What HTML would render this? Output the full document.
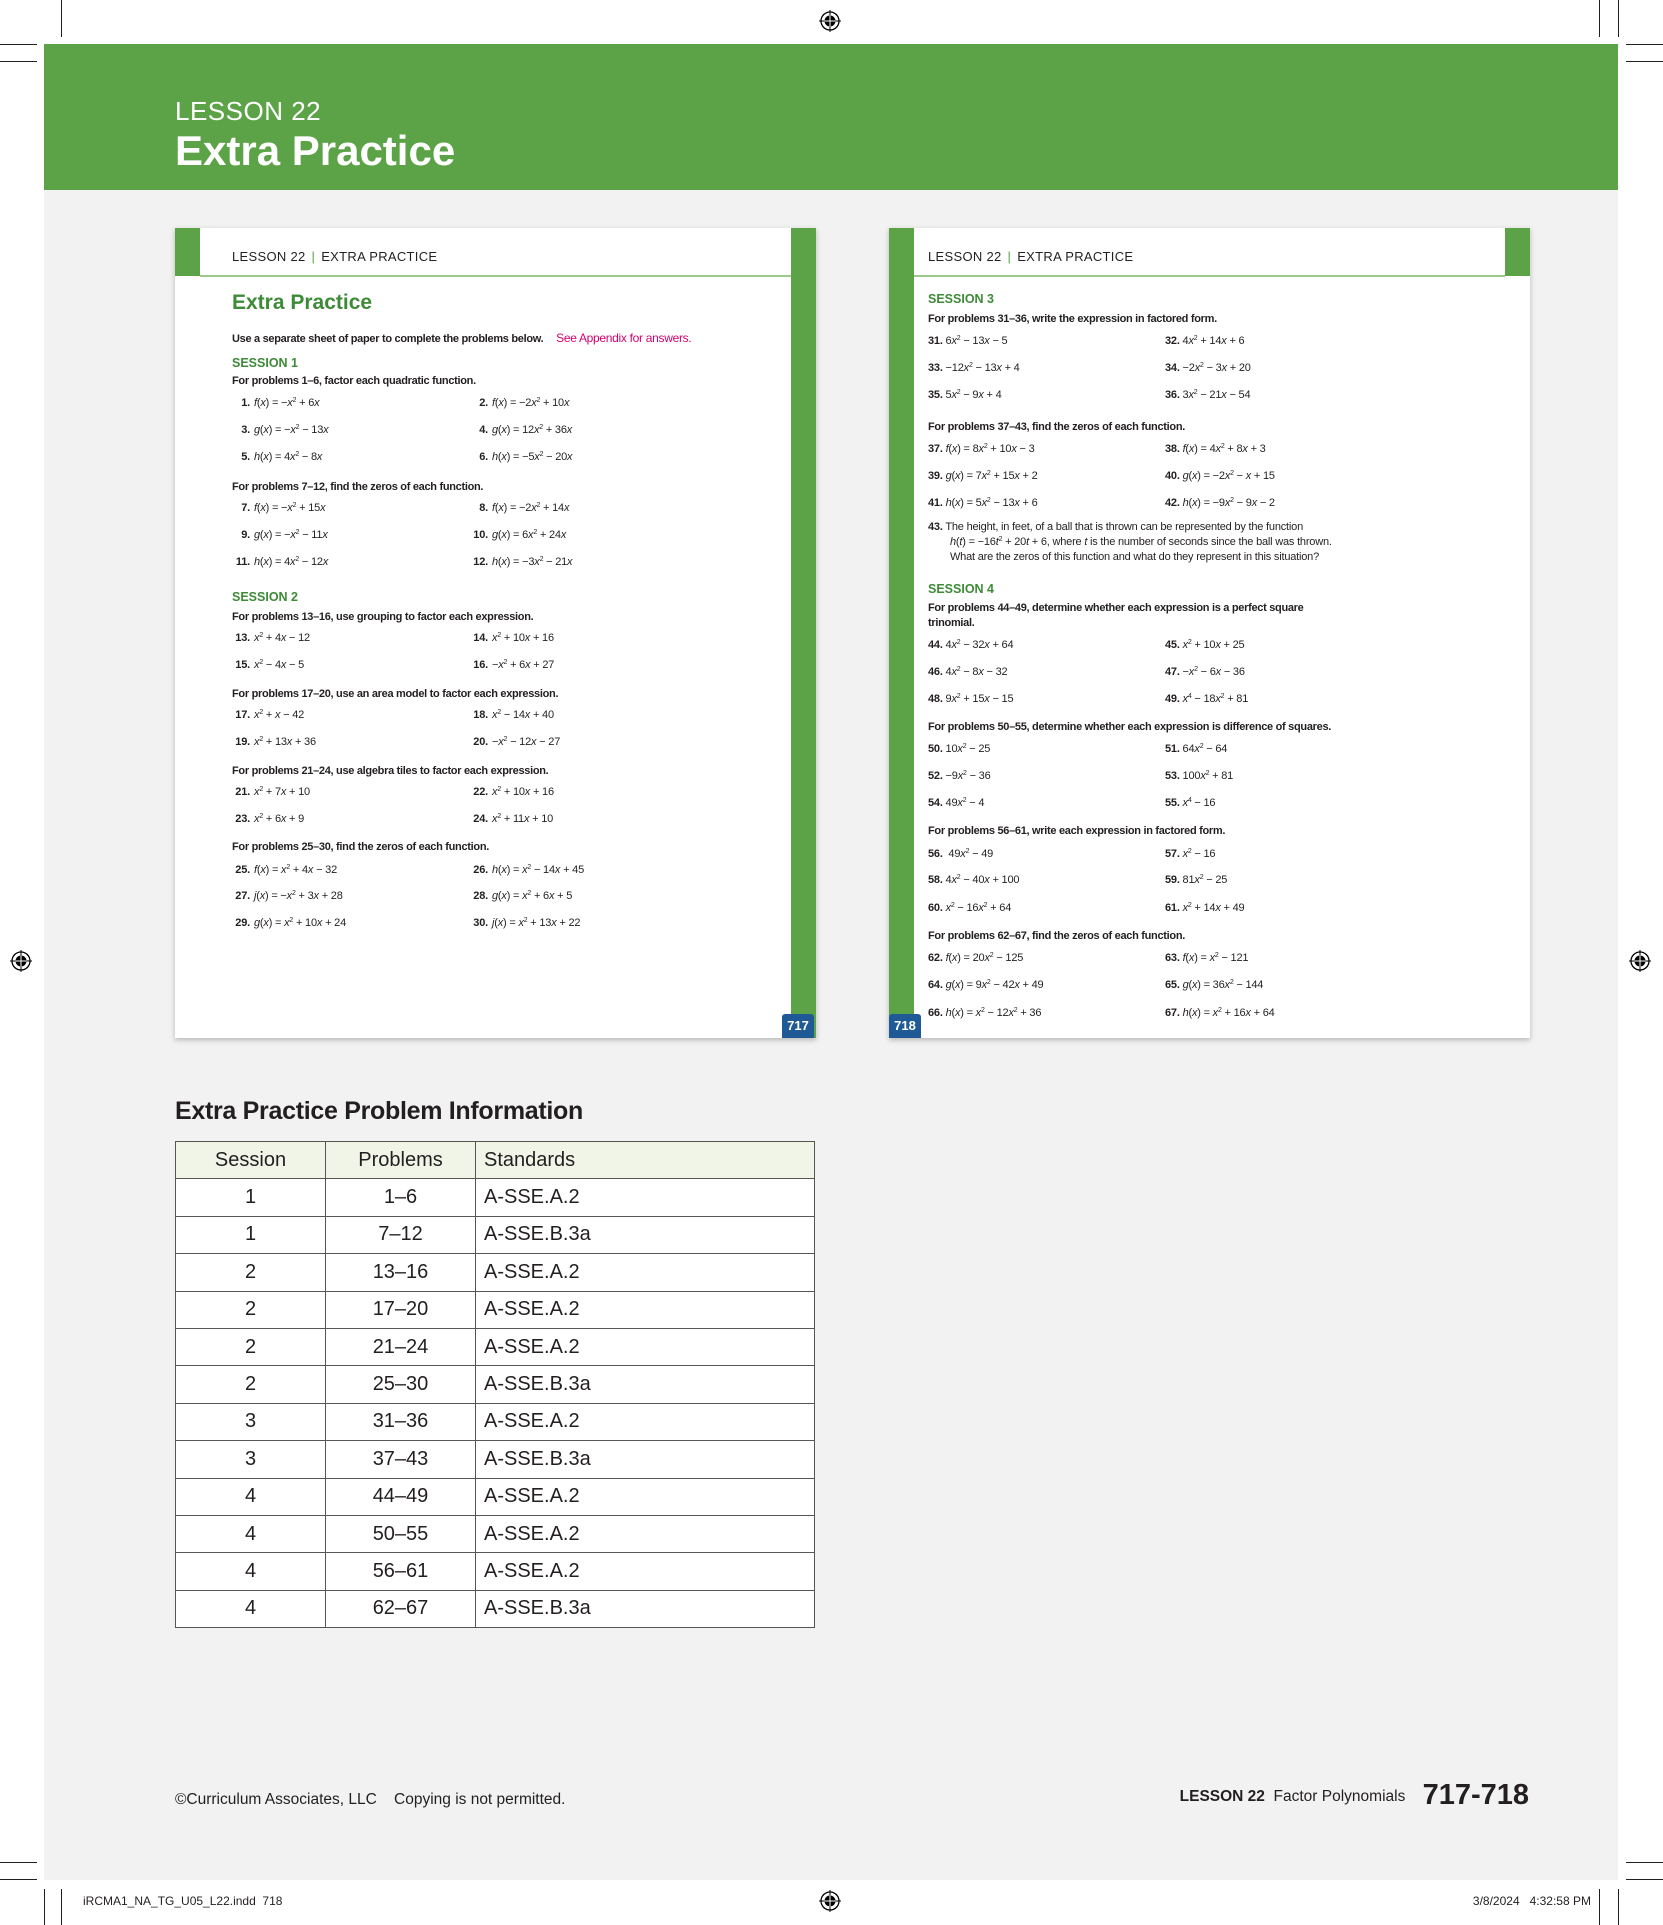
<!DOCTYPE html>
<html><head><meta charset="utf-8">
<style>
*{margin:0;padding:0;box-sizing:border-box}
body{width:1663px;height:1925px;position:relative;background:#fff;font-family:"Liberation Sans",sans-serif;color:#231f20;overflow:hidden}
.a{position:absolute;white-space:nowrap}
.gray{left:44px;top:44px;width:1574px;height:1836px;background:#f1f2f1}
.band{left:44px;top:44px;width:1574px;height:146px;background:#5ba346}
.pg{background:#fff;box-shadow:0 2px 5px rgba(0,0,0,.25)}
.g{background:#5ba346}
.hd{font-size:13px;letter-spacing:.3px;color:#231f20}
.hd b{color:#5ba346;font-weight:normal;margin:0 6px}
.t{font-size:11px;line-height:14px;letter-spacing:-.2px}
.t i{font-style:italic}
.n{font-weight:bold;font-size:11px}
.pr{font-weight:bold;font-size:11px;letter-spacing:-.3px;line-height:14px}
.ss{font-weight:bold;font-size:12.5px;color:#3d8b37;line-height:14px}
sup{font-size:7px;vertical-align:4px;line-height:0}
.ln{background:#231f20}
table{position:absolute;left:175px;top:1141px;width:640px;border-collapse:collapse;font-size:20px;background:#fff}
td,th{border:1.5px solid #555;height:37.4px;font-weight:normal;text-align:center}
th{background:#f0f5e8}
td:nth-child(3),th:nth-child(3){text-align:left;padding-left:8px}
</style></head><body>
<div class="a gray"></div>
<div class="a band"></div>
<div class="a" style="left:175px;top:96px;color:#fff;font-size:26px;letter-spacing:.5px">LESSON 22</div>
<div class="a" style="left:175px;top:127px;color:#fff;font-size:42px;font-weight:bold">Extra Practice</div>

<div class="a ln" style="left:61px;top:0;width:1px;height:37px"></div>
<div class="a ln" style="left:0;top:44px;width:37px;height:1px"></div>
<div class="a ln" style="left:1599px;top:0;width:1px;height:37px"></div>
<div class="a ln" style="left:1626px;top:44px;width:37px;height:1px"></div>
<div class="a ln" style="left:1618px;top:0;width:1px;height:37px"></div>
<div class="a ln" style="left:0;top:61px;width:37px;height:1px"></div>
<div class="a ln" style="left:1626px;top:61px;width:37px;height:1px"></div>
<div class="a ln" style="left:61px;top:1889px;width:1px;height:36px"></div>
<div class="a ln" style="left:44px;top:1889px;width:1px;height:36px"></div>
<div class="a ln" style="left:0;top:1879px;width:37px;height:1px"></div>
<div class="a ln" style="left:0;top:1862px;width:37px;height:1px"></div>
<div class="a ln" style="left:1599px;top:1889px;width:1px;height:36px"></div>
<div class="a ln" style="left:1618px;top:1889px;width:1px;height:36px"></div>
<div class="a ln" style="left:1626px;top:1879px;width:37px;height:1px"></div>
<div class="a ln" style="left:1626px;top:1862px;width:37px;height:1px"></div>
<svg class="a" style="left:819px;top:10px" width="22" height="22" viewBox="0 0 22 22"><circle cx="11" cy="11" r="9" fill="none" stroke="#000" stroke-width="1.3"/><circle cx="11" cy="11" r="5.5" fill="#000"/><path d="M0 11H22M11 0V22" stroke="#000" stroke-width="1"/><path d="M5.5 11H16.5M11 5.5V16.5" stroke="#fff" stroke-width="1"/></svg>
<svg class="a" style="left:819px;top:1890px" width="22" height="22" viewBox="0 0 22 22"><circle cx="11" cy="11" r="9" fill="none" stroke="#000" stroke-width="1.3"/><circle cx="11" cy="11" r="5.5" fill="#000"/><path d="M0 11H22M11 0V22" stroke="#000" stroke-width="1"/><path d="M5.5 11H16.5M11 5.5V16.5" stroke="#fff" stroke-width="1"/></svg>
<svg class="a" style="left:10px;top:950px" width="22" height="22" viewBox="0 0 22 22"><circle cx="11" cy="11" r="9" fill="none" stroke="#000" stroke-width="1.3"/><circle cx="11" cy="11" r="5.5" fill="#000"/><path d="M0 11H22M11 0V22" stroke="#000" stroke-width="1"/><path d="M5.5 11H16.5M11 5.5V16.5" stroke="#fff" stroke-width="1"/></svg>
<svg class="a" style="left:1629px;top:950px" width="22" height="22" viewBox="0 0 22 22"><circle cx="11" cy="11" r="9" fill="none" stroke="#000" stroke-width="1.3"/><circle cx="11" cy="11" r="5.5" fill="#000"/><path d="M0 11H22M11 0V22" stroke="#000" stroke-width="1"/><path d="M5.5 11H16.5M11 5.5V16.5" stroke="#fff" stroke-width="1"/></svg>

<div class="a pg" style="left:175px;top:228px;width:641px;height:810px"></div>
<div class="a g" style="left:175px;top:228px;width:25px;height:48px"></div>
<div class="a g" style="left:791px;top:228px;width:25px;height:810px"></div>
<div class="a" style="left:200px;top:275px;width:591px;height:1.5px;background:#9cc98c"></div>
<div class="a" style="left:782px;top:1014px;width:32px;height:24px;background:#1f5a96;border-radius:3px 3px 0 0;color:#fff;font-weight:bold;font-size:13px;text-align:center;line-height:24px">717</div>
<div class="a hd" style="left:232px;top:249px">LESSON 22<b>|</b>EXTRA PRACTICE</div>
<div class="a" style="left:232px;top:291px;font-size:21px;font-weight:bold;color:#3d8b37">Extra Practice</div>
<div class="a pr" style="left:232px;top:331px">Use a separate sheet of paper to complete the problems below. <span style="color:#d6006f;font-weight:normal;margin-left:10px;font-size:12px">See Appendix for answers.</span></div>
<div class="a ss" style="left:232px;top:356px">SESSION 1</div>
<div class="a pr" style="left:232px;top:374px">For problems 1–6, factor each quadratic function.</div>

<div class="a pg" style="left:889px;top:228px;width:641px;height:810px"></div>
<div class="a g" style="left:889px;top:228px;width:25px;height:810px"></div>
<div class="a g" style="left:1505px;top:228px;width:25px;height:48px"></div>
<div class="a" style="left:914px;top:275px;width:591px;height:1.5px;background:#9cc98c"></div>
<div class="a" style="left:889px;top:1014px;width:32px;height:24px;background:#1f5a96;border-radius:3px 3px 0 0;color:#fff;font-weight:bold;font-size:13px;text-align:center;line-height:24px">718</div>
<div class="a hd" style="left:928px;top:249px">LESSON 22<b>|</b>EXTRA PRACTICE</div>

<div class="a t" style="left:222px;top:396px;width:28px;text-align:right"><span class="n">1.</span></div><div class="a t" style="left:254px;top:396px"><i>f</i>(<i>x</i>) = −<i>x</i><sup>2</sup> + 6<i>x</i></div>
<div class="a t" style="left:458px;top:396px;width:30px;text-align:right"><span class="n">2.</span></div><div class="a t" style="left:492px;top:396px"><i>f</i>(<i>x</i>) = −2<i>x</i><sup>2</sup> + 10<i>x</i></div>
<div class="a t" style="left:222px;top:423px;width:28px;text-align:right"><span class="n">3.</span></div><div class="a t" style="left:254px;top:423px"><i>g</i>(<i>x</i>) = −<i>x</i><sup>2</sup> − 13<i>x</i></div>
<div class="a t" style="left:458px;top:423px;width:30px;text-align:right"><span class="n">4.</span></div><div class="a t" style="left:492px;top:423px"><i>g</i>(<i>x</i>) = 12<i>x</i><sup>2</sup> + 36<i>x</i></div>
<div class="a t" style="left:222px;top:450px;width:28px;text-align:right"><span class="n">5.</span></div><div class="a t" style="left:254px;top:450px"><i>h</i>(<i>x</i>) = 4<i>x</i><sup>2</sup> − 8<i>x</i></div>
<div class="a t" style="left:458px;top:450px;width:30px;text-align:right"><span class="n">6.</span></div><div class="a t" style="left:492px;top:450px"><i>h</i>(<i>x</i>) = −5<i>x</i><sup>2</sup> − 20<i>x</i></div>
<div class="a pr" style="left:232px;top:480px">For problems 7–12, find the zeros of each function.</div>
<div class="a t" style="left:222px;top:501px;width:28px;text-align:right"><span class="n">7.</span></div><div class="a t" style="left:254px;top:501px"><i>f</i>(<i>x</i>) = −<i>x</i><sup>2</sup> + 15<i>x</i></div>
<div class="a t" style="left:458px;top:501px;width:30px;text-align:right"><span class="n">8.</span></div><div class="a t" style="left:492px;top:501px"><i>f</i>(<i>x</i>) = −2<i>x</i><sup>2</sup> + 14<i>x</i></div>
<div class="a t" style="left:222px;top:528px;width:28px;text-align:right"><span class="n">9.</span></div><div class="a t" style="left:254px;top:528px"><i>g</i>(<i>x</i>) = −<i>x</i><sup>2</sup> − 11<i>x</i></div>
<div class="a t" style="left:458px;top:528px;width:30px;text-align:right"><span class="n">10.</span></div><div class="a t" style="left:492px;top:528px"><i>g</i>(<i>x</i>) = 6<i>x</i><sup>2</sup> + 24<i>x</i></div>
<div class="a t" style="left:222px;top:555px;width:28px;text-align:right"><span class="n">11.</span></div><div class="a t" style="left:254px;top:555px"><i>h</i>(<i>x</i>) = 4<i>x</i><sup>2</sup> − 12<i>x</i></div>
<div class="a t" style="left:458px;top:555px;width:30px;text-align:right"><span class="n">12.</span></div><div class="a t" style="left:492px;top:555px"><i>h</i>(<i>x</i>) = −3<i>x</i><sup>2</sup> − 21<i>x</i></div>
<div class="a ss" style="left:232px;top:590px">SESSION 2</div>
<div class="a pr" style="left:232px;top:610px">For problems 13–16, use grouping to factor each expression.</div>
<div class="a t" style="left:222px;top:631px;width:28px;text-align:right"><span class="n">13.</span></div><div class="a t" style="left:254px;top:631px"><i>x</i><sup>2</sup> + 4<i>x</i> − 12</div>
<div class="a t" style="left:458px;top:631px;width:30px;text-align:right"><span class="n">14.</span></div><div class="a t" style="left:492px;top:631px"><i>x</i><sup>2</sup> + 10<i>x</i> + 16</div>
<div class="a t" style="left:222px;top:658px;width:28px;text-align:right"><span class="n">15.</span></div><div class="a t" style="left:254px;top:658px"><i>x</i><sup>2</sup> − 4<i>x</i> − 5</div>
<div class="a t" style="left:458px;top:658px;width:30px;text-align:right"><span class="n">16.</span></div><div class="a t" style="left:492px;top:658px">−<i>x</i><sup>2</sup> + 6<i>x</i> + 27</div>
<div class="a pr" style="left:232px;top:687px">For problems 17–20, use an area model to factor each expression.</div>
<div class="a t" style="left:222px;top:708px;width:28px;text-align:right"><span class="n">17.</span></div><div class="a t" style="left:254px;top:708px"><i>x</i><sup>2</sup> + <i>x</i> − 42</div>
<div class="a t" style="left:458px;top:708px;width:30px;text-align:right"><span class="n">18.</span></div><div class="a t" style="left:492px;top:708px"><i>x</i><sup>2</sup> − 14<i>x</i> + 40</div>
<div class="a t" style="left:222px;top:735px;width:28px;text-align:right"><span class="n">19.</span></div><div class="a t" style="left:254px;top:735px"><i>x</i><sup>2</sup> + 13<i>x</i> + 36</div>
<div class="a t" style="left:458px;top:735px;width:30px;text-align:right"><span class="n">20.</span></div><div class="a t" style="left:492px;top:735px">−<i>x</i><sup>2</sup> − 12<i>x</i> − 27</div>
<div class="a pr" style="left:232px;top:764px">For problems 21–24, use algebra tiles to factor each expression.</div>
<div class="a t" style="left:222px;top:785px;width:28px;text-align:right"><span class="n">21.</span></div><div class="a t" style="left:254px;top:785px"><i>x</i><sup>2</sup> + 7<i>x</i> + 10</div>
<div class="a t" style="left:458px;top:785px;width:30px;text-align:right"><span class="n">22.</span></div><div class="a t" style="left:492px;top:785px"><i>x</i><sup>2</sup> + 10<i>x</i> + 16</div>
<div class="a t" style="left:222px;top:812px;width:28px;text-align:right"><span class="n">23.</span></div><div class="a t" style="left:254px;top:812px"><i>x</i><sup>2</sup> + 6<i>x</i> + 9</div>
<div class="a t" style="left:458px;top:812px;width:30px;text-align:right"><span class="n">24.</span></div><div class="a t" style="left:492px;top:812px"><i>x</i><sup>2</sup> + 11<i>x</i> + 10</div>
<div class="a pr" style="left:232px;top:840px">For problems 25–30, find the zeros of each function.</div>
<div class="a t" style="left:222px;top:863px;width:28px;text-align:right"><span class="n">25.</span></div><div class="a t" style="left:254px;top:863px"><i>f</i>(<i>x</i>) = <i>x</i><sup>2</sup> + 4<i>x</i> − 32</div>
<div class="a t" style="left:458px;top:863px;width:30px;text-align:right"><span class="n">26.</span></div><div class="a t" style="left:492px;top:863px"><i>h</i>(<i>x</i>) = <i>x</i><sup>2</sup> − 14<i>x</i> + 45</div>
<div class="a t" style="left:222px;top:889px;width:28px;text-align:right"><span class="n">27.</span></div><div class="a t" style="left:254px;top:889px"><i>j</i>(<i>x</i>) = −<i>x</i><sup>2</sup> + 3<i>x</i> + 28</div>
<div class="a t" style="left:458px;top:889px;width:30px;text-align:right"><span class="n">28.</span></div><div class="a t" style="left:492px;top:889px"><i>g</i>(<i>x</i>) = <i>x</i><sup>2</sup> + 6<i>x</i> + 5</div>
<div class="a t" style="left:222px;top:916px;width:28px;text-align:right"><span class="n">29.</span></div><div class="a t" style="left:254px;top:916px"><i>g</i>(<i>x</i>) = <i>x</i><sup>2</sup> + 10<i>x</i> + 24</div>
<div class="a t" style="left:458px;top:916px;width:30px;text-align:right"><span class="n">30.</span></div><div class="a t" style="left:492px;top:916px"><i>j</i>(<i>x</i>) = <i>x</i><sup>2</sup> + 13<i>x</i> + 22</div>

<div class="a ss" style="left:928px;top:292px">SESSION 3</div>
<div class="a pr" style="left:928px;top:312px">For problems 31–36, write the expression in factored form.</div>
<div class="a t" style="left:928px;top:334px"><span class="n">31.</span> 6<i>x</i><sup>2</sup> − 13<i>x</i> − 5</div>
<div class="a t" style="left:1165px;top:334px"><span class="n">32.</span> 4<i>x</i><sup>2</sup> + 14<i>x</i> + 6</div>
<div class="a t" style="left:928px;top:361px"><span class="n">33.</span> −12<i>x</i><sup>2</sup> − 13<i>x</i> + 4</div>
<div class="a t" style="left:1165px;top:361px"><span class="n">34.</span> −2<i>x</i><sup>2</sup> − 3<i>x</i> + 20</div>
<div class="a t" style="left:928px;top:388px"><span class="n">35.</span> 5<i>x</i><sup>2</sup> − 9<i>x</i> + 4</div>
<div class="a t" style="left:1165px;top:388px"><span class="n">36.</span> 3<i>x</i><sup>2</sup> − 21<i>x</i> − 54</div>
<div class="a pr" style="left:928px;top:420px">For problems 37–43, find the zeros of each function.</div>
<div class="a t" style="left:928px;top:442px"><span class="n">37.</span> <i>f</i>(<i>x</i>) = 8<i>x</i><sup>2</sup> + 10<i>x</i> − 3</div>
<div class="a t" style="left:1165px;top:442px"><span class="n">38.</span> <i>f</i>(<i>x</i>) = 4<i>x</i><sup>2</sup> + 8<i>x</i> + 3</div>
<div class="a t" style="left:928px;top:469px"><span class="n">39.</span> <i>g</i>(<i>x</i>) = 7<i>x</i><sup>2</sup> + 15<i>x</i> + 2</div>
<div class="a t" style="left:1165px;top:469px"><span class="n">40.</span> <i>g</i>(<i>x</i>) = −2<i>x</i><sup>2</sup> − <i>x</i> + 15</div>
<div class="a t" style="left:928px;top:496px"><span class="n">41.</span> <i>h</i>(<i>x</i>) = 5<i>x</i><sup>2</sup> − 13<i>x</i> + 6</div>
<div class="a t" style="left:1165px;top:496px"><span class="n">42.</span> <i>h</i>(<i>x</i>) = −9<i>x</i><sup>2</sup> − 9<i>x</i> − 2</div>
<div class="a t" style="left:928px;top:520px"><span class="n">43.</span> The height, in feet, of a ball that is thrown can be represented by the function</div>
<div class="a t" style="left:950px;top:535px"><i>h</i>(<i>t</i>) = −16<i>t</i><sup>2</sup> + 20<i>t</i> + 6, where <i>t</i> is the number of seconds since the ball was thrown.</div>
<div class="a t" style="left:950px;top:550px">What are the zeros of this function and what do they represent in this situation?</div>
<div class="a ss" style="left:928px;top:582px">SESSION 4</div>
<div class="a pr" style="left:928px;top:601px">For problems 44–49, determine whether each expression is a perfect square</div>
<div class="a pr" style="left:928px;top:616px">trinomial.</div>
<div class="a t" style="left:928px;top:638px"><span class="n">44.</span> 4<i>x</i><sup>2</sup> − 32<i>x</i> + 64</div>
<div class="a t" style="left:1165px;top:638px"><span class="n">45.</span> <i>x</i><sup>2</sup> + 10<i>x</i> + 25</div>
<div class="a t" style="left:928px;top:665px"><span class="n">46.</span> 4<i>x</i><sup>2</sup> − 8<i>x</i> − 32</div>
<div class="a t" style="left:1165px;top:665px"><span class="n">47.</span> −<i>x</i><sup>2</sup> − 6<i>x</i> − 36</div>
<div class="a t" style="left:928px;top:692px"><span class="n">48.</span> 9<i>x</i><sup>2</sup> + 15<i>x</i> − 15</div>
<div class="a t" style="left:1165px;top:692px"><span class="n">49.</span> <i>x</i><sup>4</sup> − 18<i>x</i><sup>2</sup> + 81</div>
<div class="a pr" style="left:928px;top:720px">For problems 50–55, determine whether each expression is difference of squares.</div>
<div class="a t" style="left:928px;top:742px"><span class="n">50.</span> 10<i>x</i><sup>2</sup> − 25</div>
<div class="a t" style="left:1165px;top:742px"><span class="n">51.</span> 64<i>x</i><sup>2</sup> − 64</div>
<div class="a t" style="left:928px;top:769px"><span class="n">52.</span> −9<i>x</i><sup>2</sup> − 36</div>
<div class="a t" style="left:1165px;top:769px"><span class="n">53.</span> 100<i>x</i><sup>2</sup> + 81</div>
<div class="a t" style="left:928px;top:796px"><span class="n">54.</span> 49<i>x</i><sup>2</sup> − 4</div>
<div class="a t" style="left:1165px;top:796px"><span class="n">55.</span> <i>x</i><sup>4</sup> − 16</div>
<div class="a pr" style="left:928px;top:824px">For problems 56–61, write each expression in factored form.</div>
<div class="a t" style="left:928px;top:847px"><span class="n">56.</span> &nbsp;49<i>x</i><sup>2</sup> − 49</div>
<div class="a t" style="left:1165px;top:847px"><span class="n">57.</span> <i>x</i><sup>2</sup> − 16</div>
<div class="a t" style="left:928px;top:873px"><span class="n">58.</span> 4<i>x</i><sup>2</sup> − 40<i>x</i> + 100</div>
<div class="a t" style="left:1165px;top:873px"><span class="n">59.</span> 81<i>x</i><sup>2</sup> − 25</div>
<div class="a t" style="left:928px;top:901px"><span class="n">60.</span> <i>x</i><sup>2</sup> − 16<i>x</i><sup>2</sup> + 64</div>
<div class="a t" style="left:1165px;top:901px"><span class="n">61.</span> <i>x</i><sup>2</sup> + 14<i>x</i> + 49</div>
<div class="a pr" style="left:928px;top:929px">For problems 62–67, find the zeros of each function.</div>
<div class="a t" style="left:928px;top:951px"><span class="n">62.</span> <i>f</i>(<i>x</i>) = 20<i>x</i><sup>2</sup> − 125</div>
<div class="a t" style="left:1165px;top:951px"><span class="n">63.</span> <i>f</i>(<i>x</i>) = <i>x</i><sup>2</sup> − 121</div>
<div class="a t" style="left:928px;top:978px"><span class="n">64.</span> <i>g</i>(<i>x</i>) = 9<i>x</i><sup>2</sup> − 42<i>x</i> + 49</div>
<div class="a t" style="left:1165px;top:978px"><span class="n">65.</span> <i>g</i>(<i>x</i>) = 36<i>x</i><sup>2</sup> − 144</div>
<div class="a t" style="left:928px;top:1006px"><span class="n">66.</span> <i>h</i>(<i>x</i>) = <i>x</i><sup>2</sup> − 12<i>x</i><sup>2</sup> + 36</div>
<div class="a t" style="left:1165px;top:1006px"><span class="n">67.</span> <i>h</i>(<i>x</i>) = <i>x</i><sup>2</sup> + 16<i>x</i> + 64</div>

<div class="a" style="left:175px;top:1097px;font-size:25px;font-weight:bold;letter-spacing:-.3px">Extra Practice Problem Information</div>
<table>
<tr><th style="width:150px">Session</th><th style="width:150px">Problems</th><th>Standards</th></tr>
<tr><td>1</td><td>1–6</td><td>A-SSE.A.2</td></tr>
<tr><td>1</td><td>7–12</td><td>A-SSE.B.3a</td></tr>
<tr><td>2</td><td>13–16</td><td>A-SSE.A.2</td></tr>
<tr><td>2</td><td>17–20</td><td>A-SSE.A.2</td></tr>
<tr><td>2</td><td>21–24</td><td>A-SSE.A.2</td></tr>
<tr><td>2</td><td>25–30</td><td>A-SSE.B.3a</td></tr>
<tr><td>3</td><td>31–36</td><td>A-SSE.A.2</td></tr>
<tr><td>3</td><td>37–43</td><td>A-SSE.B.3a</td></tr>
<tr><td>4</td><td>44–49</td><td>A-SSE.A.2</td></tr>
<tr><td>4</td><td>50–55</td><td>A-SSE.A.2</td></tr>
<tr><td>4</td><td>56–61</td><td>A-SSE.A.2</td></tr>
<tr><td>4</td><td>62–67</td><td>A-SSE.B.3a</td></tr>
</table>

<div class="a" style="left:175px;top:1791px;font-size:15.5px">©Curriculum Associates, LLC &nbsp;&nbsp; Copying is not permitted.</div>
<div class="a" style="right:134px;top:1779px;font-size:15.5px"><b>LESSON 22</b>&nbsp; Factor Polynomials &nbsp;&nbsp; <b style="font-size:29px;vertical-align:-3px">717-718</b></div>
<div class="a" style="left:83px;top:1894px;font-size:12px">iRCMA1_NA_TG_U05_L22.indd &nbsp;718</div>
<div class="a" style="right:72px;top:1894px;font-size:12px">3/8/2024 &nbsp; 4:32:58 PM</div>
</body></html>
